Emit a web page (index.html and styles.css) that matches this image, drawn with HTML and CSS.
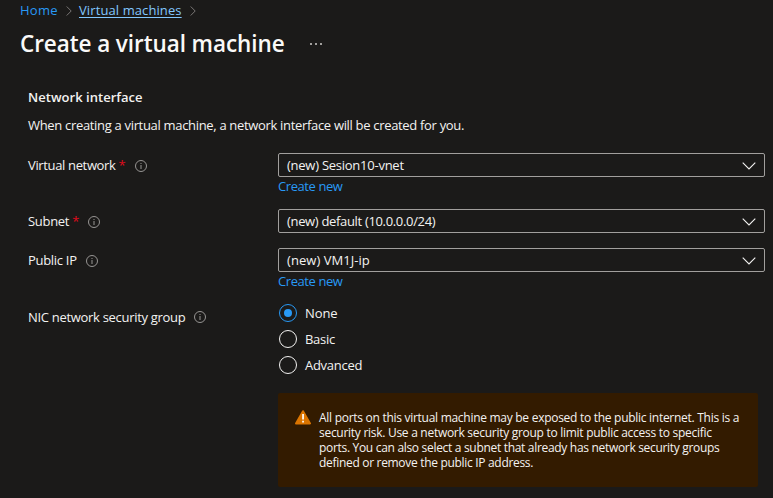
FILE: index.html
```html
<!DOCTYPE html>
<html lang="en">
<head>
<meta charset="utf-8">
<title>Create a virtual machine</title>
<link rel="stylesheet" href="styles.css">
</head>
<body>
<svg class="defs" width="0" height="0" aria-hidden="true">
  <symbol id="info" viewBox="0 0 12 12"><circle cx="6" cy="6" r="5.5" fill="none" stroke="currentColor"/><path d="M5.5 3h1v1h-1zM5.5 5h1v4h-1z" fill="currentColor"/></symbol>
  <symbol id="down" viewBox="0 0 14 8"><path d="M.7.7 7 7 13.300.7" fill="none" stroke="currentColor" stroke-width="1.1"/></symbol>
  <symbol id="crumb" viewBox="0 0 6 10"><path d="M.7.5 5.200 5 .7 9.500" fill="none" stroke="currentColor"/></symbol>
</svg>
<header>
  <nav class="crumbs">
    <a class="home">Home</a>
    <svg class="crumb"><use href="#crumb"/></svg>
    <a class="current">Virtual machines</a>
    <svg class="crumb"><use href="#crumb"/></svg>
  </nav>
  <div class="title-row">
    <h1>Create a virtual machine</h1>
    <div class="more"><i></i><i></i><i></i></div>
  </div>
</header>
<main>
  <h2><span>Network interface</span></h2>
  <p class="intro"><span>When creating a virtual machine, a network interface will be created for you.</span></p>
  <div class="field with-link">
    <label><span class="l1">Virtual network</span><b>*</b><svg class="info"><use href="#info"/></svg></label>
    <div class="control">
      <div class="select"><span class="s1">(new) Sesion10-vnet</span><svg class="down"><use href="#down"/></svg></div>
      <a class="create">Create new</a>
    </div>
  </div>
  <div class="field subnet">
    <label><span class="l2">Subnet</span><b>*</b><svg class="info"><use href="#info"/></svg></label>
    <div class="control">
      <div class="select"><span class="s2">(new) default (10.0.0.0/24)</span><svg class="down"><use href="#down"/></svg></div>
    </div>
  </div>
  <div class="field with-link">
    <label><span class="l3">Public IP</span><svg class="info"><use href="#info"/></svg></label>
    <div class="control">
      <div class="select"><span class="s3">(new) VM1J-ip</span><svg class="down"><use href="#down"/></svg></div>
      <a class="create">Create new</a>
    </div>
  </div>
  <div class="field nic">
    <label><span class="l4">NIC network security group</span><svg class="info"><use href="#info"/></svg></label>
    <div class="control">
      <div class="radio on"><i></i><span>None</span></div>
      <div class="radio"><i></i><span>Basic</span></div>
      <div class="radio"><i></i><span>Advanced</span></div>
      <div class="warning">
        <svg class="alert" viewBox="0 0 16 15"><path d="M8 1.200 15 13.500H1z" fill="#db7500" stroke="#db7500" stroke-width="2" stroke-linejoin="round"/><path d="M7.200 4h1.700v5.500H7.200zM7.200 10.700h1.700v1.700H7.200z" fill="#fff"/></svg>
        <p>
          <span class="w1">All ports on this virtual machine may be exposed to the public internet. This is a</span>
          <span class="w2">security risk. Use a network security group to limit public access to specific</span>
          <span class="w3">ports. You can also select a subnet that already has network security groups</span>
          <span class="w4">defined or remove the public IP address.</span>
        </p>
      </div>
    </div>
  </div>
</main>
</body>
</html>
```
FILE: styles.css
```css
* { box-sizing: border-box; }
body {
  margin: 0;
  height: 498px;
  overflow: hidden;
  background: #1b1a19;
  color: #f3f2f1;
  font: 13px/18px "Open Sans", "Noto Sans", sans-serif;
  white-space: nowrap;
}
.defs { position: absolute; }
svg { display: block; flex: none; }
h1, h2, p { margin: 0; }
header { padding-left: 20px; }
.crumbs { display: flex; align-items: center; height: 20px; font-size: 13px; }
.home, .create { color: #2899f5; }
.home { width: 38px; letter-spacing: .25px; }
.current { width: 103px; letter-spacing: .1px; color: #82c7ff; text-decoration: underline; text-underline-offset: 2px; }
.crumb { width: 6px; height: 10px; margin: 1px 7px 0 8px; color: #797775; }
.title-row { display: flex; align-items: center; height: 48px; }
h1 { width: 264px; font-size: 22.500px; letter-spacing: -.08px; line-height: 32px; font-weight: 600; color: #faf9f8; }
.more { display: flex; gap: 3px; margin-left: 26px; }
.more i { width: 2px; height: 2px; background: #a19f9d; }
main { padding: 20px 8px 0 28px; }
h2 { height: 18px; font-size: 13px; line-height: 18px; font-weight: 600; letter-spacing: .03px; }
.intro { margin-top: 10px; height: 37px; line-height: 18px; letter-spacing: -.32px; }
.field { display: flex; }
.with-link { height: 56px; }
.subnet { height: 39px; }
label { display: flex; align-items: center; width: 250px; height: 24px; flex: none; }
label span { letter-spacing: -.3px; }
.l1 { letter-spacing: -.35px; }
label b { margin-left: 3px; font-weight: 400; color: #e00b1c; width: 7px; }
.info { width: 12px; height: 12px; margin: 1px 0 0 9px; color: #979593; }
.control { width: 487px; }
.select {
  display: flex; align-items: center; justify-content: space-between;
  height: 24px; padding: 0 8px; border: 1px solid #a19f9d; border-radius: 2px;
}
.s1 { letter-spacing: -.25px; }
.s2 { letter-spacing: -.33px; }
.s3 { letter-spacing: .05px; }
.down { width: 14px; height: 8px; margin-top: 1px; color: #f3f2f1; }
.create { display: block; width: 65px; line-height: 19px; letter-spacing: -.42px; }
.nic label { height: 26px; }
.nic .info { margin-top: -1px; }
.radio { display: flex; align-items: center; height: 26px; padding-left: 1px; letter-spacing: -.28px; }
.nic .control { margin-top: -4px; }
.radio i { display: flex; align-items: center; justify-content: center; width: 18px; height: 18px; margin-right: 8px; border: 1px solid #f3f2f1; border-radius: 50%; }
.on { letter-spacing: -.1px; }
.on i { border-color: #2899f5; }
.on i::after { content: ""; width: 8px; height: 8px; border-radius: 50%; background: #2899f5; }
.warning { display: flex; width: 480px; height: 94px; margin-top: 15px; padding: 17px 0 0 17px; border-radius: 2px; background: #331b00; }
.alert { width: 16px; height: 15px; margin-right: 8px; }
.warning p { font-size: 12px; line-height: 15px; letter-spacing: -.28px; }
.warning p span { display: block; width: max-content; }
.warning .w3, .warning .w4 { letter-spacing: -.31px; }
```
